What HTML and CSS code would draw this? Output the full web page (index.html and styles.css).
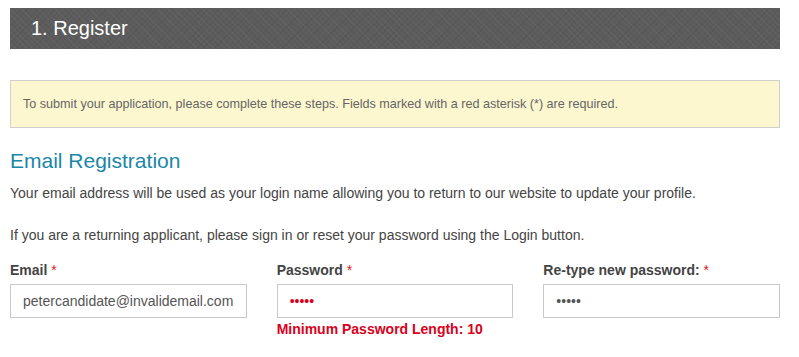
FILE: index.html
```
<!DOCTYPE html>
<html lang="en">
<head>
  <meta charset="UTF-8">
  <title>Register</title>
  <link rel="stylesheet" href="styles.css">
</head>
<body>

<div class="page">
  <div class="step-header">
    <h1>1. Register</h1>
  </div>

  <div class="notice">
    To submit your application, please complete these steps. Fields marked with a red asterisk (*) are required.
  </div>

  <h2 class="section-title">Email Registration</h2>
  <p class="intro">Your email address will be used as your login name allowing you to return to our website to update your profile.</p>
  <p class="intro">If you are a returning applicant, please sign in or reset your password using the Login button.</p>

  <div class="form-row">
    <div class="field">
      <label>Email <span class="req">*</span></label>
      <input type="text" value="petercandidate@invalidemail.com">
    </div>
    <div class="field">
      <label>Password <span class="req">*</span></label>
      <input type="password" class="invalid" value="12345">
      <div class="error">Minimum Password Length: 10</div>
    </div>
    <div class="field">
      <label>Re-type new password: <span class="req">*</span></label>
      <input type="password" value="12345">
    </div>
  </div>
</div>

</body>
</html>
```

FILE: styles.css
```
/* General */
body {
  margin: 8px 10px;
  background: #fff;
  color: #444;
  font-family: "Liberation Sans", Arial, sans-serif;
}
.page {
  max-width: 770px;
}

/* Step header bar */
.step-header {
  height: 41px;
  padding: 0 21px;
  display: flex;
  align-items: center;
  background-color: #5c5c5c;
  background-image:
    repeating-linear-gradient(45deg, rgba(255,255,255,0.04) 0 1px, transparent 1px 4px),
    repeating-linear-gradient(-45deg, rgba(0,0,0,0.06) 0 1px, transparent 1px 4px);
}
.step-header h1 {
  margin: 0;
  color: #fff;
  font-size: 20px;
  font-weight: normal;
}

/* Notice box */
.notice {
  margin-top: 31px;
  padding: 15px 12px;
  background: #fcf7cf;
  border: 1px solid #cfcfcf;
  color: #666;
  font-size: 12.6px;
  line-height: 16px;
}

/* Section */
.section-title {
  margin: 21px 0 0;
  color: #1a87a8;
  font-size: 21px;
  font-weight: normal;
  line-height: 24px;
}
.intro {
  margin: 10px 0 0;
  font-size: 14px;
  line-height: 20px;
}
.intro + .intro {
  margin-top: 22px;
}

/* Form */
.form-row {
  display: grid;
  grid-template-columns: repeat(3, 1fr);
  gap: 30px;
  margin-top: 17px;
}
.field label {
  display: block;
  margin-bottom: 6px;
  font-size: 14px;
  font-weight: bold;
  line-height: 16px;
}
.req {
  color: #e8141c;
  font-weight: normal;
}
.field input {
  box-sizing: border-box;
  width: 100%;
  height: 34px;
  margin: 0;
  padding: 0 12px;
  border: 1px solid #c8c8c8;
  background: #fff;
  color: #555;
  font-family: "Liberation Sans", Arial, sans-serif;
  font-size: 14px;
  outline: none;
}
.field input.invalid {
  color: #d9001b;
}
.error {
  margin-top: 3px;
  color: #d9001b;
  font-size: 14px;
  font-weight: bold;
  line-height: 16px;
}
```
